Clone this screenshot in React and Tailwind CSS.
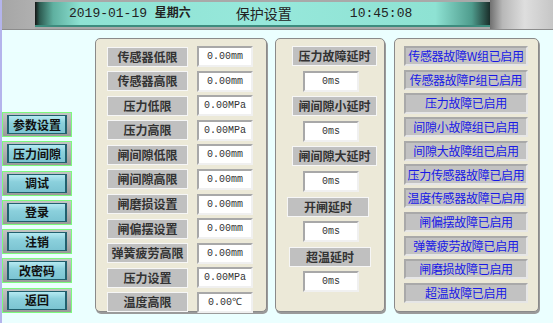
import React from "react";

const cjk = { fontFamily: '"Noto Sans CJK SC", "Noto Sans", sans-serif' };

const limits = [
  ["传感器低限", "0.00mm"],
  ["传感器高限", "0.00mm"],
  ["压力低限", "0.00MPa"],
  ["压力高限", "0.00MPa"],
  ["闸间隙低限", "0.00mm"],
  ["闸间隙高限", "0.00mm"],
  ["闸磨损设置", "0.00mm"],
  ["闸偏摆设置", "0.00mm"],
  ["弹簧疲劳高限", "0.00mm"],
  ["压力设置", "0.00MPa"],
  ["温度高限", "0.00℃"],
];

const delays = [
  ["压力故障延时", "w-[85px] ml-[9px]"],
  ["闸间隙小延时", "w-[85px] ml-[9px]"],
  ["闸间隙大延时", "w-[85px] ml-[9px]"],
  ["开闸延时", "w-[82px] -ml-[4px]"],
  ["超温延时", "w-[82px]"],
];

const faults = [
  "传感器故障W组已启用",
  "传感器故障P组已启用",
  "压力故障已启用",
  "间隙小故障组已启用",
  "间隙大故障组已启用",
  "压力传感器故障已启用",
  "温度传感器故障已启用",
  "闸偏摆故障已启用",
  "弹簧疲劳故障已启用",
  "闸磨损故障已启用",
  "超温故障已启用",
];

const navs = ["参数设置", "压力间隙", "调试", "登录", "注销", "改密码", "返回"];

function Label({ text, className = "" }) {
  return (
    <div
      className={`h-[20px] flex items-center justify-center bg-[#c0c0c0] border border-[#f6f6f6] text-[12px] font-bold text-[#333] ${className}`}
      style={cjk}
    >
      {text}
    </div>
  );
}

function Value({ text, className = "" }) {
  return (
    <div
      className={`h-[21px] flex items-center justify-center bg-white border-2 border-t-[#a8a8a8] border-l-[#a8a8a8] border-b-[#f0f0f0] border-r-[#f0f0f0] text-[10px] text-[#333] font-['Liberation_Mono',monospace] ${className}`}
    >
      {text}
    </div>
  );
}

function Panel({ className = "", children }) {
  return (
    <div
      className={`h-[274px] bg-[#ece9d8] border border-[#8a8a8a] rounded-[5px] shadow-[1px_2px_0_#9a9a9a] ${className}`}
    >
      {children}
    </div>
  );
}

export default function App() {
  return (
    <div className="w-[553px] h-[323px] bg-[#ebffff] overflow-hidden border-l-2 border-[#b4b4ec]">
      <div className="h-[30px] flex bg-[#a9a9a9] border-b border-[#8c8c8c]">
        <div className="w-[33px] bg-gradient-to-r from-[#a6a6a6] to-[#b0b0b0]" />
        <div className="flex-1 my-[2px] flex items-center border-b-2 border-[#3d8c7e] bg-[linear-gradient(90deg,#141414_0%,#2c5a50_1%,#5fb0a0_4%,#8ee2d3_10%,#97e8db_50%,#8ee2d3_88%,#4f9c8d_96%,#1a2e2a_100%)]">
          <span className="ml-[34px] text-[13px] text-[#222] font-['Liberation_Mono',monospace]">
            2019-01-19 <span className="text-[12px] font-bold" style={cjk}>星期六</span>
          </span>
          <span className="ml-[45px] text-[14px] text-[#222]" style={cjk}>保护设置</span>
          <span className="ml-[58px] text-[13px] text-[#222] font-['Liberation_Mono',monospace]">10:45:08</span>
        </div>
        <div className="w-[63px] bg-[linear-gradient(90deg,#707070_0%,#b8b8b8_20%,#dedede_55%,#c6c6c6_100%)]" />
      </div>

      <div className="flex pt-[8px]">
        <div className="w-[70px] flex flex-col gap-[4.3px] pt-[74px]">
          {navs.map((n) => (
            <div
              key={n}
              className="h-[25px] border border-[#7dfa7d] bg-[linear-gradient(180deg,#c4c4c4,#9a9a9a)] px-[4px] py-[2px]"
            >
              <div
                className="h-full flex items-center justify-center border border-[#21606e] border-x-2 bg-[linear-gradient(180deg,#b6eaf2,#8bd0dc_40%,#7cc4d2)] text-[12px] font-bold text-[#111]"
                style={cjk}
              >
                {n}
              </div>
            </div>
          ))}
        </div>

        <Panel className="ml-[23px] w-[172px] pt-[7px] pl-[11px] flex flex-col gap-[3.6px]">
          {limits.map(([l, v]) => (
            <div key={l} className="flex items-center gap-[9px]">
              <Label text={l} className="w-[81px]" />
              <Value text={v} className="w-[56px]" />
            </div>
          ))}
        </Panel>

        <Panel className="ml-[8px] w-[110px] pt-[7px] flex flex-col items-center gap-[4.6px]">
          {delays.map(([l, w]) => (
            <React.Fragment key={l}>
              <Label text={l} className={w} />
              <Value text="0ms" className="w-[56px] ml-[2px]" />
            </React.Fragment>
          ))}
        </Panel>

        <Panel className="ml-[9px] w-[145px] pt-[7px] pl-[9px] flex flex-col gap-[3.5px]">
          {faults.map((f) => (
            <div
              key={f}
              className="w-[124px] h-[20.2px] flex items-center justify-center bg-[#c2c2c2] border-2 border-t-[#a9a9a9] border-l-[#a9a9a9] border-b-[#e6e6e6] border-r-[#e6e6e6] text-[12px] text-[#1818e6] whitespace-nowrap tracking-[-0.3px]"
              style={cjk}
            >
              {f}
            </div>
          ))}
        </Panel>
      </div>
    </div>
  );
}
